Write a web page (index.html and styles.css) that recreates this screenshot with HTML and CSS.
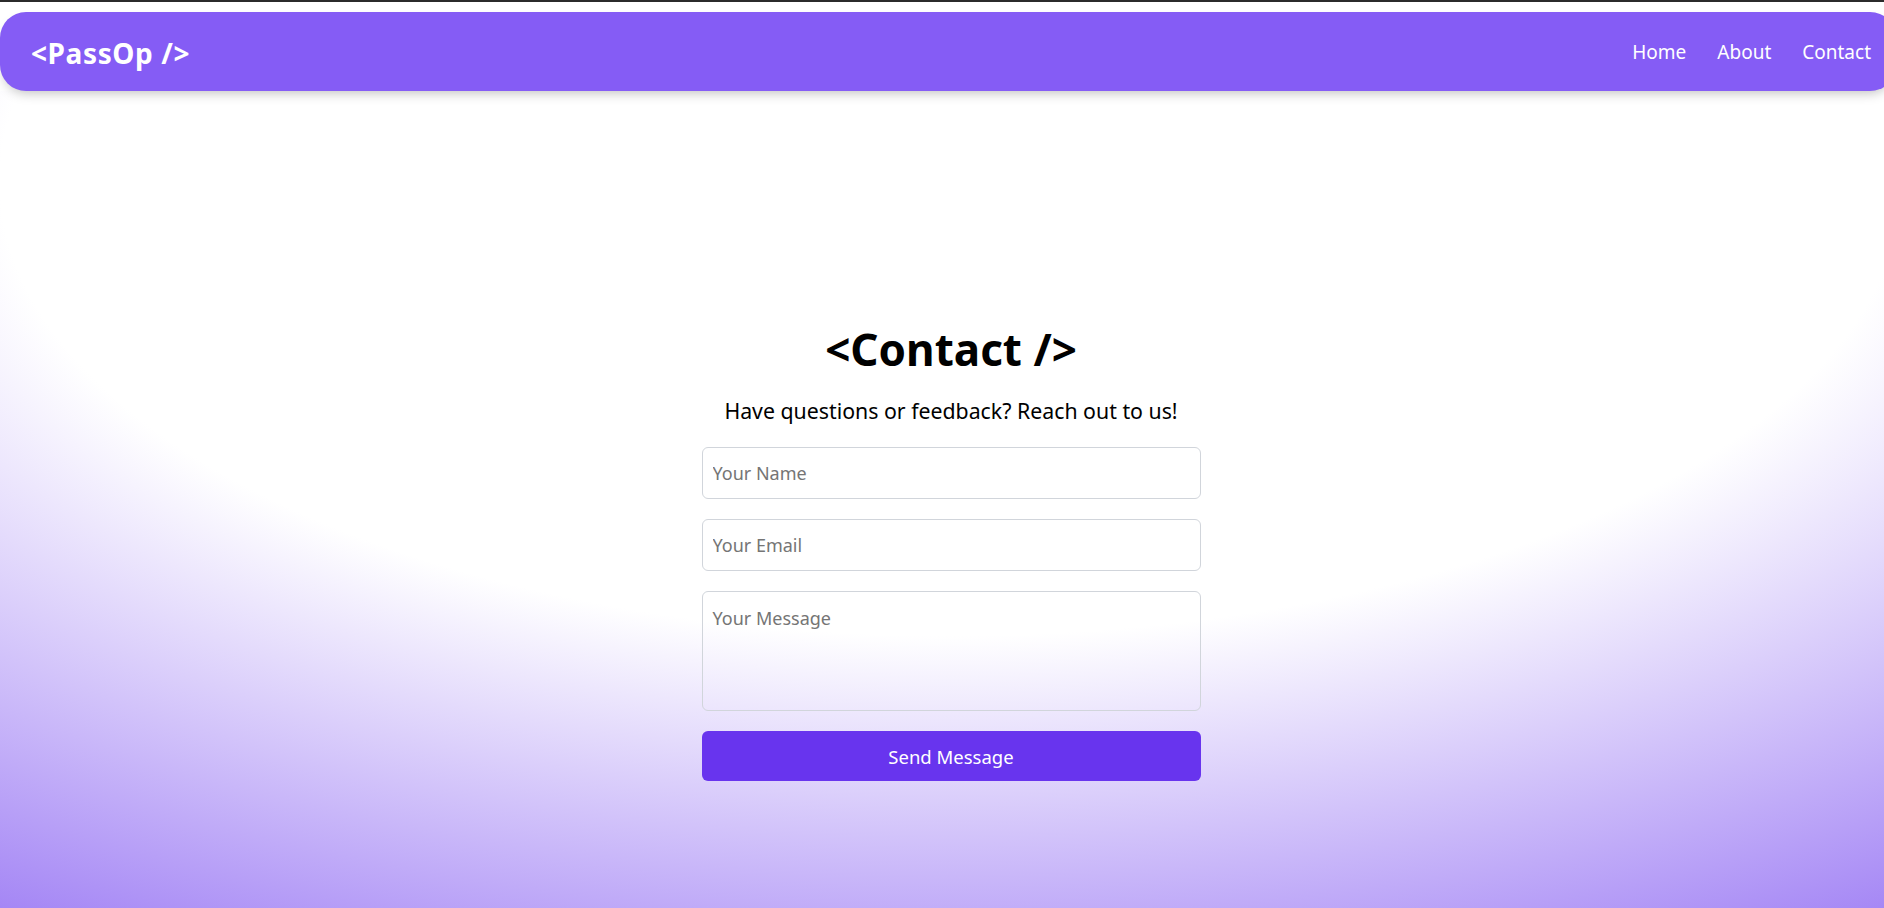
FILE: index.html
```html
<!DOCTYPE html>
<html lang="en">
<head>
<meta charset="utf-8">
<title>PassOp - Contact</title>
<link rel="stylesheet" href="styles.css">
</head>
<body>
<div class="topline"></div>
<div class="page">
  <nav class="navbar">
    <div class="logo">&lt;PassOp /&gt;</div>
    <ul class="links">
      <li><a href="#">Home</a></li>
      <li><a href="#">About</a></li>
      <li><a href="#">Contact</a></li>
    </ul>
  </nav>
  <main class="contact">
    <h1 class="title">&lt;Contact /&gt;</h1>
    <p class="subtitle">Have questions or feedback? Reach out to us!</p>
    <form class="form">
      <input class="field" type="text" placeholder="Your Name">
      <input class="field" type="email" placeholder="Your Email">
      <textarea class="field area" placeholder="Your Message"></textarea>
      <button class="send" type="button">Send Message</button>
    </form>
  </main>
</div>
</body>
</html>
```
FILE: styles.css
```css
html, body {
  margin: 0;
  overflow: hidden;
}
body {
  font-family: "Noto Sans", "Open Sans", sans-serif;
  background: #fff;
  color: #000;
}
.topline {
  height: 2px;
  background: #2b2b2b;
}
.page {
  width: calc(100vw + 18px);
}
.navbar {
  position: relative;
  z-index: 1;
  margin: 10px 6px 0 0;
  height: 79px;
  box-sizing: border-box;
  background: #855cf5;
  border-radius: 26px;
  display: flex;
  align-items: center;
  justify-content: space-between;
  padding: 0 25px 0 31px;
  box-shadow: 0 6px 12px -4px rgba(0, 0, 0, 0.25);
  color: #fff;
}
.logo {
  font-weight: 700;
  font-size: 28px;
  letter-spacing: 0.6px;
  padding-top: 2px;
}
.links {
  display: flex;
  gap: 31px;
  list-style: none;
  margin: 0;
  padding: 0;
  font-size: 19px;
}
.links a {
  color: #fff;
  text-decoration: none;
}
.contact {
  height: calc(100vh - 91px);
  box-sizing: border-box;
  padding-top: 232px;
  background-image: radial-gradient(125% 125% at 50% 10%, #fff 40%, #6633ee 100%);
  background-size: 100% 908px;
  background-repeat: no-repeat;
  display: flex;
  flex-direction: column;
  align-items: center;
}
.title {
  margin: 0;
  font-size: 44px;
  line-height: 52px;
  font-weight: 700;
}
.subtitle {
  margin: 22px 0 0;
  font-size: 21.3px;
  line-height: 28px;
}
.form {
  margin-top: 22px;
  width: 499px;
  display: flex;
  flex-direction: column;
  gap: 20px;
}
.field {
  margin: 0;
  height: 52px;
  box-sizing: border-box;
  border: 1px solid #d1d5db;
  border-radius: 6px;
  padding: 12px 10px;
  font-family: "Noto Sans", "Open Sans", sans-serif;
  font-size: 18px;
  line-height: 26px;
  background: transparent;
  color: #000;
  outline: none;
}
.field::placeholder {
  color: #757575;
}
.area {
  height: 120px;
  resize: none;
  line-height: 28px;
  display: block;
}
.send {
  margin: 0;
  height: 50px;
  border: 0;
  border-radius: 6px;
  background: #6834ee;
  color: #fff;
  font-family: "Noto Sans", "Open Sans", sans-serif;
  font-size: 18.5px;
  cursor: pointer;
}
```
